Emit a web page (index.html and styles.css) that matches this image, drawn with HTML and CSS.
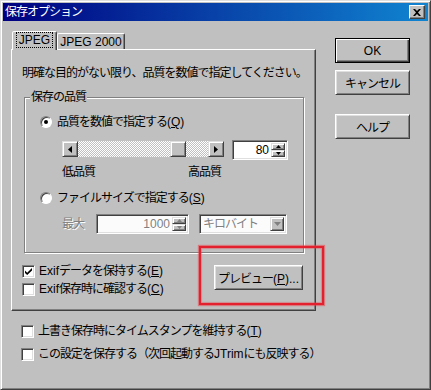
FILE: index.html
```html
<!DOCTYPE html>
<html lang="ja">
<head>
    <meta charset="UTF-8">
    <title>保存オプション</title>
    <link rel="stylesheet" href="styles.css">
</head>
<body>
    <div class="window">
        <div class="titlebar">
            <span class="title">保存オプション</span>
            <span class="close-btn">
                <svg width="8" height="7" viewBox="0 0 8 7"><path d="M0 0h2l2 2 2-2h2L5 3.5 8 7H6L4 5 2 7H0l3-3.5z" fill="#000"/></svg>
            </span>
        </div>

        <div class="client">
            <div class="main">
                <div class="tabs">
                    <div class="tab active"><span class="focus">JPEG</span></div>
                    <div class="tab">JPEG 2000</div>
                </div>

                <div class="panel">
                    <p class="hint">明確な目的がない限り、品質を数値で指定してください。</p>

                    <div class="group">
                        <span class="legend">保存の品質</span>

                        <div class="option">
                            <span class="radio checked"></span>
                            <span>品質を数値で指定する<span class="lt">(<u>Q</u>)</span></span>
                        </div>

                        <div class="slider-row">
                            <div class="slider">
                                <span class="sb-btn">
                                    <svg width="4" height="7" viewBox="0 0 4 7"><path d="M4 0v7L0 3.5z" fill="#000"/></svg>
                                </span>
                                <span class="track"><span class="thumb"></span></span>
                                <span class="sb-btn">
                                    <svg width="4" height="7" viewBox="0 0 4 7"><path d="M0 0v7l4-3.5z" fill="#000"/></svg>
                                </span>
                            </div>
                            <div class="edit spin-edit">
                                <span class="value">80</span>
                                <span class="spinner">
                                    <span class="spin-btn"><svg width="5" height="3" viewBox="0 0 5 3"><path d="M0 3h5L2.5 0z" fill="#000"/></svg></span>
                                    <span class="spin-btn"><svg width="5" height="3" viewBox="0 0 5 3"><path d="M0 0h5L2.5 3z" fill="#000"/></svg></span>
                                </span>
                            </div>
                        </div>

                        <div class="slider-labels">
                            <span>低品質</span>
                            <span>高品質</span>
                        </div>

                        <div class="option option-size">
                            <span class="radio"></span>
                            <span>ファイルサイズで指定する<span class="lt">(<u>S</u>)</span></span>
                        </div>

                        <div class="size-row">
                            <span class="disabled-text size-label">最大</span>
                            <div class="edit spin-edit size-edit">
                                <span class="value disabled-text">1000</span>
                                <span class="spinner">
                                    <span class="spin-btn"><svg width="5" height="3" viewBox="0 0 5 3"><path d="M0 3h5L2.5 0z" fill="#808080"/></svg></span>
                                    <span class="spin-btn"><svg width="5" height="3" viewBox="0 0 5 3"><path d="M0 0h5L2.5 3z" fill="#808080"/></svg></span>
                                </span>
                            </div>
                            <div class="edit combo">
                                <span class="value disabled-text">キロバイト</span>
                                <span class="combo-btn">
                                    <svg width="7" height="4" viewBox="0 0 7 4"><path d="M0 0h7L3.5 4z" fill="#808080"/></svg>
                                </span>
                            </div>
                        </div>
                    </div>

                    <div class="panel-bottom">
                        <div class="checks">
                            <div class="check-row">
                                <span class="checkbox">
                                    <svg width="9" height="9" viewBox="0 0 9 9"><path d="M1 3.5l2.2 2.2L8 1v2.4L3.2 8.1 1 5.9z" fill="#000"/></svg>
                                </span>
                                <span><span class="lt">Exif</span>データを保持する<span class="lt">(<u>E</u>)</span></span>
                            </div>
                            <div class="check-row">
                                <span class="checkbox"></span>
                                <span><span class="lt">Exif</span>保存時に確認する<span class="lt">(<u>C</u>)</span></span>
                            </div>
                        </div>
                        <button class="btn preview">プレビュー<span class="lt">(<u>P</u>)...</span></button>
                    </div>
                </div>

                <div class="outer-checks">
                    <div class="check-row">
                        <span class="checkbox"></span>
                        <span>上書き保存時にタイムスタンプを維持する<span class="lt">(<u>T</u>)</span></span>
                    </div>
                    <div class="check-row">
                        <span class="checkbox"></span>
                        <span>この設定を保存する（次回起動する<span class="lt">JTrim</span>にも反映する）</span>
                    </div>
                </div>
            </div>

            <div class="buttons">
                <button class="btn default">OK</button>
                <button class="btn cancel">キャンセル</button>
                <button class="btn help">ヘルプ</button>
            </div>
        </div>

        <div class="highlight"></div>
    </div>
</body>
</html>
```

FILE: styles.css
```css
/* classic dialog look */
* {
    box-sizing: border-box;
}

body {
    margin: 0;
    background-color: #c0c0c0;
    font-family: "Liberation Sans", "Noto Sans CJK JP", sans-serif;
    font-size: 12px;
    line-height: 14px;
    letter-spacing: -1px;
    color: #000;
}

u {
    text-decoration: underline;
    text-underline-offset: 1px;
}

.lt {
    letter-spacing: 0;
}

.window {
    position: relative;
    width: 431px;
    height: 390px;
    padding: 2px;
    background-color: #c0c0c0;
    border: 1px solid;
    border-color: #dfdfdf #404040 #404040 #dfdfdf;
    box-shadow: inset 1px 1px #fff, inset -1px -1px #808080;
}

.titlebar {
    display: flex;
    align-items: center;
    justify-content: space-between;
    height: 18px;
    padding: 0 2px;
    background: linear-gradient(to right, #000080, #1084d0);
    color: #fff;
}

.close-btn {
    display: flex;
    align-items: center;
    justify-content: center;
    width: 16px;
    height: 14px;
    margin-right: 1px;
    background-color: #c0c0c0;
    border: 1px solid;
    border-color: #fff #404040 #404040 #fff;
    box-shadow: inset -1px -1px #808080;
}

.client {
    display: flex;
    padding: 10px 0 0 8px;
}

.main {
    width: 305px;
}

/* tabs */
.tabs {
    position: relative;
    z-index: 1;
    display: flex;
    align-items: flex-end;
    height: 18px;
    padding-left: 1px;
}

.tab {
    display: flex;
    align-items: center;
    justify-content: center;
    width: 68px;
    height: 16px;
    letter-spacing: 0;
    border: 1px solid;
    border-bottom: none;
    border-color: #fff #404040 transparent #fff;
    border-radius: 2px 2px 0 0;
    box-shadow: inset -1px 0 #808080;
}

.tab.active {
    width: 45px;
    height: 19px;
    margin-bottom: -1px;
    background-color: #c0c0c0;
    align-items: flex-start;
    padding-top: 1px;
}

.focus {
    padding: 0 2px;
    outline: 1px dotted #000;
}

.panel {
    width: 305px;
    height: 262px;
    padding: 16px 0 0 10px;
    border: 1px solid;
    border-color: #fff #404040 #404040 #fff;
    box-shadow: inset -1px -1px #808080;
}

.hint {
    margin: 0;
}

/* group box */
.group {
    position: relative;
    width: 280px;
    height: 156px;
    margin: 17px 0 0 2px;
    padding: 17px 0 0 15px;
    border: 1px solid #808080;
    box-shadow: inset 1px 1px #fff, 1px 1px #fff;
}

.legend {
    position: absolute;
    top: -8px;
    left: 5px;
    padding: 0 1px;
    background-color: #c0c0c0;
}

.option {
    display: flex;
    align-items: center;
    gap: 5px;
    height: 14px;
}

.option-size {
    margin-top: 12px;
}

.radio {
    position: relative;
    width: 12px;
    height: 12px;
    border-radius: 50%;
    background-color: #fff;
    border: 1px solid;
    border-color: #808080 #fff #fff #808080;
    box-shadow: inset 1px 1px #404040;
}

.radio.checked::after {
    content: "";
    position: absolute;
    top: 3px;
    left: 3px;
    width: 4px;
    height: 4px;
    border-radius: 50%;
    background-color: #000;
}

/* slider */
.slider-row {
    display: flex;
    gap: 8px;
    margin: 11px 0 0 22px;
}

.slider {
    display: flex;
    width: 162px;
    height: 16px;
    margin-top: 1px;
}

.sb-btn,
.thumb,
.spin-btn,
.combo-btn {
    display: flex;
    align-items: center;
    justify-content: center;
    background-color: #c0c0c0;
    border: 1px solid;
    border-color: #dfdfdf #404040 #404040 #dfdfdf;
    box-shadow: inset 1px 1px #fff, inset -1px -1px #808080;
}

.sb-btn {
    width: 16px;
    height: 16px;
}

.track {
    display: flex;
    flex: 1;
    background: repeating-conic-gradient(#fff 0 25%, #c0c0c0 0 50%) 0 0 / 2px 2px;
}

.thumb {
    width: 16px;
    height: 16px;
    margin-left: 92px;
}

.edit {
    display: flex;
    height: 20px;
    background-color: #fff;
    border: 1px solid;
    border-color: #808080 #fff #fff #808080;
    box-shadow: inset 1px 1px #404040, inset -1px -1px #dfdfdf;
    padding: 2px;
}

.spin-edit {
    width: 56px;
}

.value {
    flex: 1;
    text-align: right;
    padding-right: 2px;
    letter-spacing: 0;
}

.spinner {
    display: flex;
    flex-direction: column;
    width: 14px;
}

.spin-btn {
    flex: 1;
}

.slider-labels {
    display: flex;
    margin: 5px 0 0 22px;
}

.slider-labels span:first-child {
    width: 126px;
}

/* file size row */
.size-row {
    display: flex;
    align-items: center;
    margin: 9px 0 0 22px;
}

.disabled-text {
    color: #808080;
    text-shadow: 1px 1px #fff;
}

.size-label {
    width: 34px;
}

.size-edit {
    width: 93px;
    background-color: #fbfbfb;
}

.combo {
    width: 88px;
    margin-left: 10px;
    background-color: #fbfbfb;
}

.combo .value {
    text-align: left;
    padding-left: 1px;
    letter-spacing: -1px;
}

.combo-btn {
    width: 14px;
}

/* checks */
.panel-bottom {
    display: flex;
    justify-content: space-between;
    align-items: flex-start;
    width: 281px;
    margin-top: 11px;
}

.checks {
    display: flex;
    flex-direction: column;
    gap: 4px;
}

.check-row {
    display: flex;
    align-items: center;
    gap: 4px;
    height: 14px;
    white-space: nowrap;
}

.checkbox {
    flex: none;
    display: flex;
    align-items: center;
    justify-content: center;
    width: 13px;
    height: 13px;
    background-color: #fff;
    border: 1px solid;
    border-color: #808080 #fff #fff #808080;
    box-shadow: inset 1px 1px #404040, inset -1px -1px #dfdfdf;
}

.outer-checks {
    display: flex;
    flex-direction: column;
    gap: 9px;
    margin-top: 13px;
    padding-left: 10px;
}

/* buttons */
.btn {
    width: 75px;
    height: 25px;
    padding: 0;
    font-family: inherit;
    font-size: 12px;
    letter-spacing: -1px;
    white-space: nowrap;
    color: #000;
    background-color: #c0c0c0;
    border: 1px solid;
    border-color: #fff #404040 #404040 #fff;
    box-shadow: inset 1px 1px #dfdfdf, inset -1px -1px #808080;
}

.btn.default {
    border-color: #000;
    letter-spacing: 0;
    box-shadow: inset 1px 1px #fff, inset -1px -1px #404040, inset -2px -2px #808080;
}

.preview {
    width: 89px;
    margin-top: 1px;
}

.buttons {
    display: flex;
    flex-direction: column;
    margin-left: 19px;
    padding-top: 7px;
}

.cancel {
    margin-top: 7px;
}

.help {
    margin-top: 19px;
}

/* red annotation drawn over the dialog */
.highlight {
    position: absolute;
    left: 198px;
    top: 245px;
    width: 125px;
    height: 59px;
    border: 2px solid #e3202e;
    box-shadow: 0 0 1px 1px rgba(235, 60, 70, 0.55), inset 0 0 1px 1px rgba(235, 60, 70, 0.4);
}
```
